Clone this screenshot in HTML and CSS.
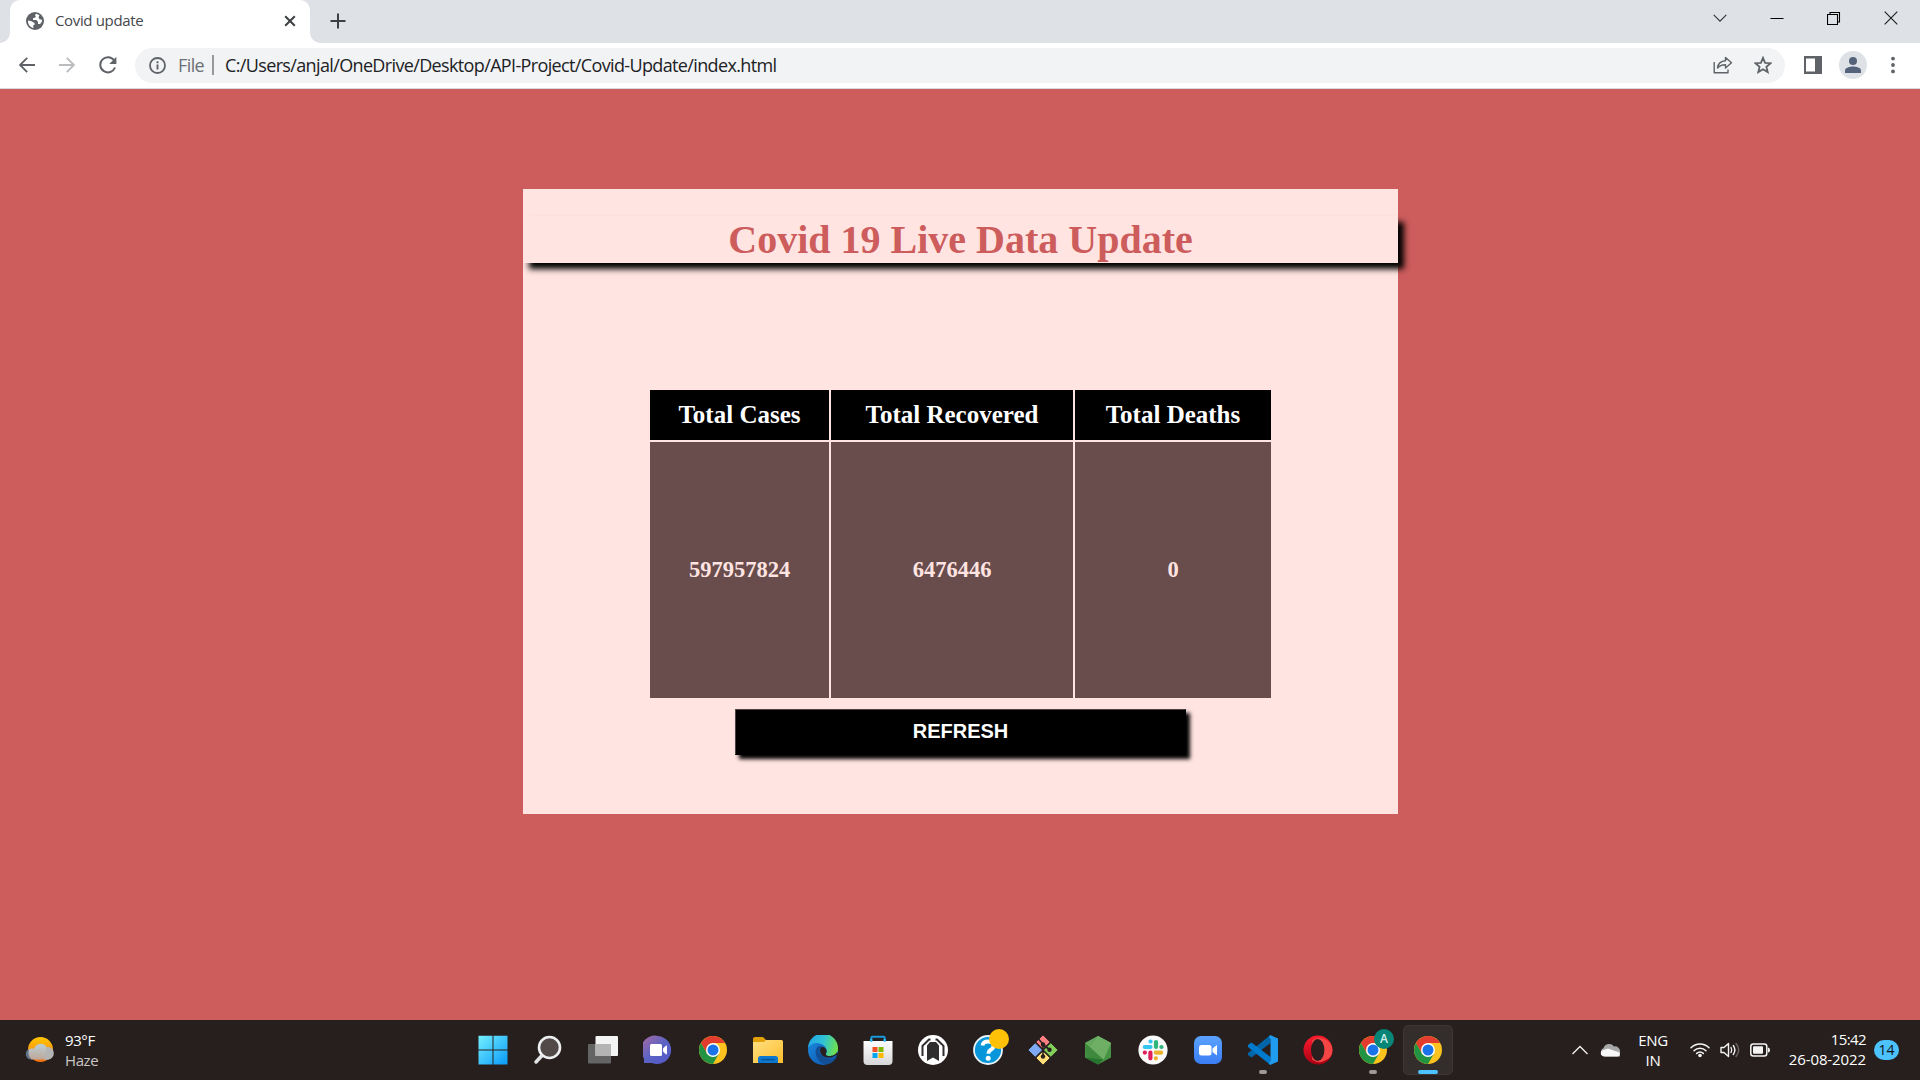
FILE: index.html
```html
<!DOCTYPE html>
<html lang="en">
<head>
<meta charset="utf-8">
<title>Covid update</title>
<link rel="stylesheet" href="styles.css">
</head>
<body>
<svg class="defs" width="0" height="0">
  <defs>
    <linearGradient id="win" x1="0" y1="0" x2="1" y2="1"><stop offset="0" stop-color="#75f0ff"/><stop offset="1" stop-color="#0899f8"/></linearGradient>
    <linearGradient id="chat" x1="0" y1="0" x2="1" y2="1"><stop offset="0" stop-color="#b06aa0"/><stop offset=".5" stop-color="#5b63c4"/><stop offset="1" stop-color="#5258c8"/></linearGradient>
    <linearGradient id="folder" x1="0" y1="0" x2="1" y2="1"><stop offset="0" stop-color="#ffe083"/><stop offset="1" stop-color="#fdbd2c"/></linearGradient>
    <linearGradient id="edgeTop" x1="0" y1=".3" x2="1" y2=".5"><stop offset="0" stop-color="#23a5e8"/><stop offset=".5" stop-color="#2fc2d5"/><stop offset="1" stop-color="#6fe04c"/></linearGradient>
    <linearGradient id="edgeLow" x1="0" y1="0" x2="1" y2="1"><stop offset="0" stop-color="#1c8be4"/><stop offset="1" stop-color="#0c50a5"/></linearGradient>
    <linearGradient id="sun" x1="0" y1="0" x2="0" y2="1"><stop offset="0" stop-color="#ffc800"/><stop offset="1" stop-color="#f66f10"/></linearGradient>
    <linearGradient id="cloud" x1="0" y1="0" x2="0" y2="1"><stop offset="0" stop-color="#b9d0d5"/><stop offset="1" stop-color="#c0a698"/></linearGradient>
    <linearGradient id="opera" x1="0" y1="0" x2="0" y2="1"><stop offset="0" stop-color="#ff1b2d"/><stop offset="1" stop-color="#a70014"/></linearGradient>
    <linearGradient id="bag" x1="0" y1="0" x2="0" y2="1"><stop offset="0" stop-color="#fff"/><stop offset="1" stop-color="#d6d6d8"/></linearGradient>
    <linearGradient id="zoomBg" x1="0" y1="0" x2="0" y2="1"><stop offset="0" stop-color="#5aa2ff"/><stop offset="1" stop-color="#3b7df5"/></linearGradient>
    <symbol id="chrome" viewBox="0 0 28 28">
      <circle cx="14" cy="14" r="14" fill="#fcc31e"/>
      <path d="M14 7H26.1A14 14 0 0 0 1.900 7L8 17.500Z" fill="#e33b2e"/>
      <path d="M1.900 7A14 14 0 0 0 14 28L20 17.500 14 20 8 17.500Z" fill="#229342"/>
      <circle cx="14" cy="14" r="7" fill="#fff"/><circle cx="14" cy="14" r="5.500" fill="#1a73e8"/>
    </symbol>
  </defs>
</svg>

<header class="tabstrip">
  <div class="tab">
    <svg class="globe" width="18" height="18" viewBox="0 0 18 18"><circle cx="9" cy="9" r="9" fill="#5f6368"/><path d="M10.5 1.8C9 2.5 8.6 3.4 9.8 4.2 9.5 6 8 5.6 7 6.2V8H10.5L12 10V12H14C15.5 11 16.3 9.5 16 7.8L13.5 7.2 12.5 5.2 13.5 3.2ZM2 8.5 5.5 9.3 8.5 11V13H7.3V16C4 15.3 1.8 12.3 2 8.5Z" fill="#fff"/></svg>
    <span class="tab-title">Covid update</span>
    <svg class="tab-close" width="12" height="12" viewBox="0 0 12 12"><path d="M1.2 1.2 10.8 10.8M10.8 1.2 1.2 10.8" stroke="#3c4043" stroke-width="2"/></svg>
  </div>
  <svg class="new-tab" width="16" height="16" viewBox="0 0 16 16"><path d="M8 .5V15.5M.5 8H15.5" stroke="#3c4043" stroke-width="2"/></svg>
  <div class="window-controls">
    <svg width="14" height="14" viewBox="0 0 14 14"><path d="M.7 3.8 7 10.1 13.3 3.8" fill="none" stroke="#333" stroke-width="1.1"/></svg>
    <svg width="14" height="14" viewBox="0 0 14 14"><path d="M.5 7.5H13.5" stroke="#000"/></svg>
    <svg width="14" height="14" viewBox="0 0 14 14"><path d="M.5 3.5H10.5V13.5H.5ZM3 3V1.500H12.500V11H11" fill="none" stroke="#000" stroke-width="1.1"/></svg>
    <svg width="14" height="14" viewBox="0 0 14 14"><path d="M.7.7 13.3 13.3M13.3.7.7 13.3" stroke="#222" stroke-width="1.2"/></svg>
  </div>
</header>

<nav class="toolbar">
  <svg class="nav-icon" width="16" height="16" viewBox="0 0 16 16"><path d="M16 8H1M8.2.8 1 8 8.2 15.2" fill="none" stroke="#5f6368" stroke-width="1.9"/></svg>
  <svg class="nav-icon forward" width="16" height="16" viewBox="0 0 16 16"><path d="M0 8H15M7.8.8 15 8 7.8 15.2" fill="none" stroke="#babcbe" stroke-width="1.9"/></svg>
  <svg class="nav-icon reload" width="18" height="18" viewBox="0 0 18 18"><path d="M15 4.2A7.6 7.6 0 1 0 16 11.5" fill="none" stroke="#5f6368" stroke-width="2"/><path d="M17.4.8V7.9H10.3Z" fill="#5f6368"/></svg>
  <div class="omnibox">
    <svg class="info" width="17" height="17" viewBox="0 0 17 17"><circle cx="8.5" cy="8.5" r="7.5" fill="none" stroke="#5f6368" stroke-width="1.8"/><path d="M8.5 7.6V12.6M8.5 4.3V6.2" stroke="#5f6368" stroke-width="1.9"/></svg>
    <span class="scheme">File</span>
    <span class="divider"></span>
    <span class="url">C:/Users/anjal/OneDrive/Desktop/API-Project/Covid-Update/index.html</span>
    <svg class="share" width="20" height="18" viewBox="0 0 20 18"><path d="M1.2 6V16.8H15V13.5M4.5 12C5 7.500 8 5 12.5 4.700V1.500L18.500 6.700 12.500 12V8.700C9 8.600 6.500 9.600 4.500 12Z" fill="none" stroke="#5f6368" stroke-width="1.4" stroke-linejoin="round"/></svg>
    <svg class="star" width="18" height="18" viewBox="0 0 18 18"><path d="M9 1.800 11.100 6.800 16.600 7.200 12.400 10.800 13.700 16.100 9 13.200 4.300 16.100 5.600 10.800 1.400 7.200 6.900 6.800Z" fill="none" stroke="#5f6368" stroke-width="1.800"/></svg>
  </div>
  <svg class="panel" width="18" height="18" viewBox="0 0 18 18"><path d="M0 0H18V18H0ZM2 2.500V15.500H11V2.500Z" fill="#5f6368" fill-rule="evenodd"/></svg>
  <svg class="avatar" width="28" height="28" viewBox="0 0 28 28"><circle cx="14" cy="14" r="14" fill="#dee1e6"/><circle cx="14" cy="10" r="4" fill="#54637a"/><path d="M6 22V19.500C6 16.500 11 15.500 14 15.500S22 16.500 22 19.500V22Z" fill="#54637a"/></svg>
  <svg class="dots" width="4" height="18" viewBox="0 0 4 18"><g fill="#5f6368"><circle cx="2" cy="2.600" r="1.900"/><circle cx="2" cy="9" r="1.900"/><circle cx="2" cy="15.400" r="1.900"/></g></svg>
</nav>

<main class="page">
  <section class="card">
    <h1>Covid 19 Live Data Update</h1>
    <table>
      <colgroup><col class="col-cases"><col class="col-recovered"><col class="col-deaths"></colgroup>
      <tr><th>Total Cases</th><th>Total Recovered</th><th>Total Deaths</th></tr>
      <tr><td>597957824</td><td>6476446</td><td>0</td></tr>
    </table>
    <button>REFRESH</button>
  </section>
</main>

<footer class="taskbar">
  <div class="weather">
    <svg width="30" height="28" viewBox="0 0 30 28"><circle cx="15.500" cy="13.500" r="12.500" fill="url(#sun)"/><path d="M7 23.500A5.500 5.500 0 0 1 6.500 12.500 6 6 0 0 1 9 12.700 7 7 0 0 1 21.500 11 6.500 6.500 0 0 1 23.500 23.500Z" fill="url(#cloud)"/><path d="M7 23.500C0 24 -1 15 4 13.500 3 18 3.500 21 7 23.500Z" fill="#61748a"/><path d="M21.500 11A6.300 6.300 0 1 1 23.500 23.500H19Z" fill="#b5b4b4"/></svg>
    <div class="weather-text"><span>93°F</span><span class="muted">Haze</span></div>
  </div>
  <div class="apps">
    <div class="app"><svg width="30" height="30" viewBox="0 0 30 30"><path d="M.5.700H14.500V14.500H.5ZM15.500.700H29.500V14.500H15.500ZM.5 15.500H14.500V29.500H.5ZM15.500 15.500H29.500V29.500H15.500Z" fill="url(#win)"/></svg></div>
    <div class="app"><svg width="30" height="30" viewBox="0 0 30 30"><path d="M9 20.500 3 27" stroke="#e1e3e5" stroke-width="3.500" stroke-linecap="round"/><circle cx="16.500" cy="12.500" r="10.500" fill="#514a48" stroke="#eceeef" stroke-width="2.600"/></svg></div>
    <div class="app"><svg width="30" height="30" viewBox="0 0 30 30"><rect x="0" y="9" width="23" height="19.500" rx="1" fill="#646464"/><rect x="7.500" y="1" width="22.500" height="20" rx="1" fill="#f4f4f4"/><path d="M7.500 9H23V21H7.500Z" fill="#b4b4b4"/></svg></div>
    <div class="app"><svg width="30" height="30" viewBox="0 0 30 30"><path d="M15 1A14 14 0 1 1 9 28H1V23.500A14 14 0 0 1 15 1Z" fill="url(#chat)"/><rect x="7" y="9" width="12" height="12" rx="1.500" fill="#fff"/><path d="M20 13.500 22.800 10.800Q24 10 24 12V18Q24 20 22.800 19.200L20 16.500Z" fill="#fff"/></svg></div>
    <div class="app"><svg width="28" height="28"><use href="#chrome"/></svg></div>
    <div class="app"><svg width="30" height="30" viewBox="0 0 30 30"><path d="M0 4Q0 2 2 2H10L13 5V12H0Z" fill="#e2a008"/><path d="M0 7H11L13 5H28.500Q30 5 30 6.500V28H0Z" fill="url(#folder)"/><path d="M5 28V23.500Q5 21 7.500 21H22.500Q25 21 25 23.500V28Z" fill="#0d78d0"/><path d="M8.500 24.600H21.500" stroke="#0a4f92" stroke-width="1.300"/></svg></div>
    <div class="app"><svg width="30" height="30" viewBox="0 0 30 30"><circle cx="15" cy="15" r="15" fill="url(#edgeLow)"/><path d="M0 13A15 15 0 0 1 30 14C30 19 26 21 21.500 21 18 21 17 19.500 18.500 17.500 20 13 15 8 9 8 5 8 2 10 0 13Z" fill="url(#edgeTop)"/><path d="M8 14C6 22 12 29 18 29.500 22 29 26 26.500 28 23 22 25 14 23 11.500 17Q11 14 14 11.500 10 10 8 14Z" fill="#124f96"/><path d="M18.500 17.500A4.500 4.500 0 0 0 13.500 12C10.500 15 12.500 20 16.500 21.700 20.500 23.500 25 22.500 28 20 30 21 30 20 29 17 27 20.500 24 21 21.500 21 18 21 17 19.500 18.500 17.500Z" fill="#281f1e"/></svg></div>
    <div class="app"><svg width="30" height="30" viewBox="0 0 30 30"><path d="M8.300 7V3Q8.300 1.800 9.500 1.800H20.500Q21.700 1.800 21.700 3V7" fill="none" stroke="#1899dc" stroke-width="2"/><path d="M.5 6H29.500V26Q29.500 30 25.500 30H4.500Q.5 30 .5 26Z" fill="url(#bag)"/><path d="M9.500 12H14.500V17H9.500Z" fill="#f25022"/><path d="M15.500 12H20.500V17H15.500Z" fill="#7fba00"/><path d="M9.500 18H14.500V23H9.500Z" fill="#00a4ef"/><path d="M15.500 18H20.500V23H15.500Z" fill="#ffb900"/><path d="M8.300 7V4M21.700 7V4" stroke="#36c2f5" stroke-width="2"/></svg></div>
    <div class="app"><svg width="30" height="30" viewBox="0 0 30 30"><circle cx="15" cy="15" r="15" fill="#fff"/><path d="M9 10.500 12 7H18L21 10.500V26L15 22.500 9 26Z" fill="#302d2f"/><path d="M12.500 4.500H11L4.500 11V21M17.500 4.500H19L25.500 11V21" fill="none" stroke="#302d2f" stroke-width="2"/><path d="M7 10V24M23 10V24" stroke="#fff" stroke-width="1.200"/></svg></div>
    <div class="app"><svg width="30" height="30" viewBox="0 0 30 30"><circle cx="15" cy="15" r="14" fill="#0796da" stroke="#e9f3f8" stroke-width="1.800"/><path d="M9.500 10.500Q10 6.500 15 6.500 20.500 6.500 20.500 10.800 20.500 13.500 17.500 15 15.500 16 15.500 18.800" fill="none" stroke="#fff" stroke-width="3.800"/><circle cx="15.200" cy="23.300" r="2.500" fill="#fff"/></svg><span class="badge badge-yellow"></span></div>
    <div class="app"><svg width="30" height="30" viewBox="0 0 30 30"><g stroke="#281f1e" stroke-width=".8"><path d="M15 0 22 7 15 14 8 7Z" fill="#ff7f82" stroke-linejoin="round"/><path d="M7.200 7.800 14.500 15 7.200 22.200 0 15Z" fill="#7eaaf5"/><path d="M22.800 7.800 30 15 22.800 22.200 15.500 15Z" fill="#82cf5c"/><path d="M15 16 22 23 15 30 8 23Z" fill="#ffde78"/></g><path d="M10.500 4 15 9V22M15 9.500 22 15" fill="none" stroke="#281f1e" stroke-width="1.600"/><g fill="#281f1e"><circle cx="15" cy="9.500" r="2.200"/><circle cx="15" cy="21.500" r="2.200"/><circle cx="21.500" cy="14.700" r="2.200"/></g></svg></div>
    <div class="app"><svg width="30" height="30" viewBox="0 0 30 30"><path d="M15 1 28 8V22.500L15 29.500 2 22.500V8Z" fill="#459343"/><path d="M15 1 28 8 20.500 24.500 2 8Z" fill="#65a85d"/><path d="M2 8 20.500 24.500 4 23.500Z" fill="#3e893e"/><path d="M15 1 28 8 20.500 24.500 7 12Z" fill="#6fae65"/><path d="M2 22.500 20.500 24.500 15 29.500Z" fill="#27742e"/></svg></div>
    <div class="app"><svg width="30" height="30" viewBox="0 0 30 30"><circle cx="15" cy="15" r="14.600" fill="#fafafa"/><g fill="none" stroke-width="4.200" stroke-linecap="round"><path d="M12.500 6.500H12.600M6.800 12H12.500" stroke="#36c5f0"/><path d="M18 7V12M23.400 12H23.500" stroke="#2eb67d"/><path d="M17.800 17.600H23.200M17.800 23.300H17.900" stroke="#ecb22e"/><path d="M12.400 17.600V23.300M6.800 17.600H6.900" stroke="#e01e5a"/></g></svg></div>
    <div class="app"><svg width="28" height="28" viewBox="0 0 28 28"><rect width="28" height="28" rx="7" fill="url(#zoomBg)"/><rect x="5" y="9" width="12.500" height="10.500" rx="2.500" fill="#fff"/><path d="M18.500 12.500 23 9V19.500L18.500 16Z" fill="#fff"/></svg></div>
    <div class="app"><svg width="30" height="30" viewBox="0 0 30 30"><path d="M22.500 0V8L3.500 22.500 0 20V18Z" fill="#0065a9"/><path d="M22.500 30V22L3.500 7.500 0 10V12Z" fill="#007acc"/><path d="M22 0 30 3.500V26.500L22 30 21 28 22.500 26V4L21 2Z" fill="#1f9cf0"/></svg><span class="running"></span></div>
    <div class="app"><svg width="30" height="30" viewBox="0 0 30 30"><circle cx="15" cy="15" r="14.500" fill="url(#opera)"/><path d="M9 5.500Q15 1 21 4 29.500 7 29.500 15T21 26Q15 29 9 24.500Z" fill="#f44545"/><ellipse cx="14.700" cy="15" rx="6.700" ry="11" fill="#281f1e"/></svg></div>
    <div class="app"><svg width="28" height="28"><use href="#chrome"/></svg><span class="badge badge-profile">A</span><span class="running"></span></div>
    <div class="app active"><svg width="28" height="28"><use href="#chrome"/></svg><span class="running current"></span></div>
  </div>
  <div class="tray">
    <svg class="chevron" width="16" height="10" viewBox="0 0 16 10"><path d="M.5 9 8 1.500 15.500 9" fill="none" stroke="#f2f2f2" stroke-width="1.300"/></svg>
    <svg class="onedrive" width="20" height="14" viewBox="0 0 20 14"><path d="M5 13.500A4.500 4.500 0 0 1 3.500 5 6 6 0 0 1 14 3.500 5 5 0 0 1 20 9V13.500Z" fill="#a8a8a8"/><path d="M4.500 13.500C1 13.500-.5 10 2 7.500L8 5.500 19.500 9.500Q20.500 13.500 16.500 13.500Z" fill="#f7f7f7"/></svg>
    <div class="language"><span>ENG</span><span>IN</span></div>
    <svg class="wifi" width="20" height="16" viewBox="0 0 20 16"><g fill="none" stroke="#f4f4f4" stroke-width="1.500" stroke-linecap="round"><path d="M1 5.800A12.500 12.500 0 0 1 19 5.800M4 8.700A8.500 8.500 0 0 1 16 8.700M6.700 11.400A5 5 0 0 1 13.300 11.400"/></g><circle cx="10" cy="13.500" r="1.800" fill="#f4f4f4"/></svg>
    <svg class="speaker" width="20" height="18" viewBox="0 0 20 18"><g fill="none" stroke="#f4f4f4" stroke-width="1.400" stroke-linecap="round" stroke-linejoin="round"><path d="M1 6.500H4L8.500 2.500V15.500L4 11.500H1ZM11 6.500Q12.500 9 11 11.500M13.300 4.500Q16.500 9 13.300 13.500"/><path d="M16 2.500Q21.500 9 16 15.500" stroke="#6b6463"/></g></svg>
    <svg class="battery" width="20" height="14" viewBox="0 0 20 14"><rect x=".8" y="1" width="16" height="12" rx="2.500" fill="none" stroke="#f4f4f4" stroke-width="1.500"/><rect x="3" y="3.200" width="10" height="7.600" rx="1" fill="#f4f4f4"/><path d="M18 4.500Q20 4.500 20 7T18 9.500Z" fill="#f4f4f4"/></svg>
    <div class="clock"><span>15:42</span><span class="date">26-08-2022</span></div>
    <span class="notifications">14</span>
  </div>
</footer>
</body>
</html>
```
FILE: styles.css
```css
* {
  box-sizing: border-box;
}

body {
  margin: 0;
  width: 1920px;
  height: 1080px;
  overflow: hidden;
  display: flex;
  flex-direction: column;
  font-family: "Open Sans", "Noto Sans", sans-serif;
}

svg {
  display: block;
  flex: none;
}

.defs {
  position: absolute;
}

/* Browser chrome */
.tabstrip {
  flex: none;
  height: 43px;
  background: #dee1e6;
  display: flex;
}

.tab {
  width: 300px;
  margin-left: 10px;
  padding: 0 14px 0 16px;
  background: #fff;
  border-radius: 10px 10px 0 0;
  display: flex;
  align-items: center;
  position: relative;
}

.tab::before,
.tab::after {
  content: "";
  position: absolute;
  bottom: 0;
  left: -10px;
  width: 10px;
  height: 10px;
  background: radial-gradient(circle at 0 0, transparent 9.5px, #fff 10px);
}

.tab::after {
  left: 300px;
  background: radial-gradient(circle at 100% 0, transparent 9.5px, #fff 10px);
}

.globe {
  margin-top: -1px;
}

.tab-title {
  margin: -3px 0 0 11px;
  font-size: 15px;
  line-height: 20px;
  letter-spacing: -0.35px;
  color: #45484c;
  flex: 1;
}

.tab-close {
  margin-top: -1px;
}

.new-tab {
  margin: 13px 0 0 20px;
}

.window-controls {
  margin: 11px 22px 0 auto;
  display: flex;
  gap: 43px;
}

.toolbar {
  flex: none;
  height: 46px;
  padding: 0 0 1px 19px;
  background: #fff;
  border-bottom: 1px solid #d5d8dc;
  display: flex;
  align-items: center;
}

.nav-icon {
  margin-right: 24px;
}

.reload {
  margin-right: 18px;
}

.omnibox {
  flex: none;
  width: 1650px;
  height: 35px;
  padding: 0 13px 0 14px;
  border-radius: 18px;
  background: #f1f3f4;
  display: flex;
  align-items: center;
  font-size: 18px;
  line-height: 24px;
  white-space: nowrap;
}

.scheme {
  margin-left: 12px;
  width: 34px;
  color: #6c7074;
  letter-spacing: -0.6px;
}

.divider {
  width: 2px;
  height: 20px;
  background: #96999c;
}

.url {
  margin-left: 11px;
  flex: 1;
  color: #202124;
  letter-spacing: -0.64px;
}

.share {
  margin-right: 21px;
}

.panel {
  margin-left: 19px;
}

.avatar {
  margin-left: 17px;
}

.dots {
  margin-left: 24px;
}

/* Page */
.page {
  flex: 1;
  background: #cd5c5c;
  padding-top: 100px;
}

.card {
  width: 875px;
  height: 625px;
  margin-left: 523px;
  padding-top: 27px;
  background: #ffe4e1;
  display: flex;
  flex-direction: column;
  align-items: center;
  font-family: "Liberation Serif", "Times New Roman", serif;
}

h1 {
  margin: 0;
  width: 875px;
  height: 47px;
  background: #ffe4e1;
  box-shadow: 6px 6px 6px #000;
  color: #cd5c5c;
  font-size: 40px;
  line-height: 48px;
  text-align: center;
}

table {
  width: 625px;
  margin: 125px 0 0;
  table-layout: fixed;
  border-spacing: 2px;
  font-weight: bold;
  text-align: center;
}

.col-cases {
  width: 179px;
}

.col-recovered {
  width: 242px;
}

.col-deaths {
  width: 196px;
}

th {
  height: 50px;
  padding: 0;
  background: #000;
  color: #fff;
  font-size: 25px;
}

td {
  height: 256px;
  padding: 0;
  background: #694c4c;
  color: #ffe4e1;
  font-size: 22.5px;
}

button {
  width: 451px;
  height: 46px;
  margin-top: 9px;
  padding: 0 0 1px;
  border: 1px solid #000;
  border-top-color: #4c4444;
  border-left-color: #4c4444;
  background: #000;
  box-shadow: 4px 4px 4px #000;
  color: #fff;
  font: bold 20px "Liberation Sans", Arial, sans-serif;
}

/* Taskbar */
.taskbar {
  flex: none;
  height: 60px;
  background: #271f1e;
  display: flex;
  color: #fff;
  font-size: 15px;
  line-height: 20px;
}

.weather {
  width: 465px;
  padding-left: 25px;
  display: flex;
  align-items: center;
}

.weather-text {
  margin-left: 10px;
  display: flex;
  flex-direction: column;
  letter-spacing: -0.4px;
}

.muted {
  color: #c9c6c5;
}

.apps {
  display: grid;
  grid-template-columns: repeat(18, 55px);
}

.app {
  position: relative;
  display: flex;
  align-items: center;
  justify-content: center;
}

.active {
  width: 50px;
  height: 50px;
  margin: 5px 3px;
  background: #332d2c;
  border: 1px solid #3c3635;
  border-radius: 5px;
}

.badge {
  position: absolute;
  left: 29px;
  top: 9px;
  width: 20px;
  height: 20px;
  border-radius: 50%;
  text-align: center;
}

.badge-yellow {
  background: #ffc107;
}

.badge-profile {
  background: #078577;
  color: #d5f0ec;
  font-size: 12px;
  font-weight: 600;
}

.running {
  position: absolute;
  left: 24px;
  bottom: 6px;
  width: 8px;
  height: 4px;
  border-radius: 2px;
  background: #9c9998;
}

.current {
  left: 14px;
  bottom: 0;
  width: 20px;
  background: #4cc2ff;
}

.tray {
  flex: 1;
  padding: 0 21px 0 117px;
  display: flex;
  align-items: center;
}

.onedrive {
  margin-left: 12px;
}

.language,
.clock {
  display: flex;
  flex-direction: column;
}

.language {
  width: 34px;
  margin-left: 16px;
  align-items: center;
  letter-spacing: -0.3px;
}

.wifi {
  margin-left: 20px;
}

.speaker {
  margin-left: 10px;
}

.battery {
  margin-left: 10px;
}

.clock {
  width: 96px;
  margin-top: -2px;
  align-items: flex-end;
  letter-spacing: -0.6px;
}

.date {
  letter-spacing: -0.1px;
}

.notifications {
  width: 25px;
  height: 20px;
  margin-left: 8px;
  border-radius: 10px;
  background: #4cc2ff;
  color: #111;
  font-size: 14px;
  text-align: center;
}
```
